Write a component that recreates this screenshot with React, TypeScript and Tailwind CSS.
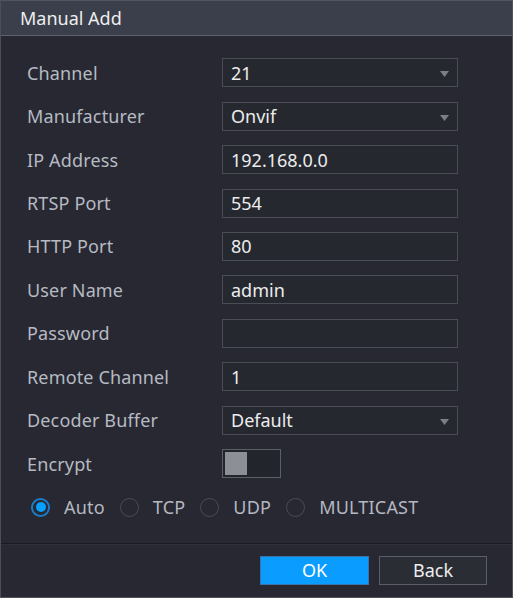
import React from "react";

const labelCls = "w-[195px] text-[18px] tracking-[0.15px] text-[#b6bac2] leading-none";

function Arrow() {
  return (
    <svg width="9" height="6" viewBox="0 0 9 6" className="absolute right-[8px] top-[12px]">
      <polygon points="0,0 9,0 4.5,6" fill="#7b7e86" />
    </svg>
  );
}

function Field({ value, select }: { value?: string; select?: boolean }) {
  return (
    <div className="relative w-[236px] h-[29px] border border-[#4a4d56] bg-[#262830] flex items-center pl-[8px] text-[18px] text-[#ececec] leading-none">
      <span>{value}</span>
      {select && <Arrow />}
    </div>
  );
}

function Row({ label, children }: { label: string; children: React.ReactNode }) {
  return (
    <div className="h-[43.44px] flex items-center">
      <div className={labelCls}>{label}</div>
      {children}
    </div>
  );
}

function Radio({ label, checked }: { label: string; checked?: boolean }) {
  return (
    <div className="flex items-center">
      <div
        className={
          "w-[19px] h-[19px] rounded-full flex items-center justify-center " +
          (checked ? "border-2 border-[#1b7dc6]" : "border-[1.5px] border-[#494c55]")
        }
      >
        {checked && <div className="w-[10px] h-[10px] rounded-full bg-[#0aa0ff]" />}
      </div>
      <span className="ml-[14px] mr-[15px] text-[18px] tracking-[0.2px] text-[#b4b8c0] leading-none">{label}</span>
    </div>
  );
}

export default function App() {
  return (
    <div
      className="w-[513px] h-[598px] bg-[#272832] border border-[#50545e] border-l-[#4a4e5a] flex flex-col"
      style={{ fontFamily: '"Noto Sans", "Open Sans", sans-serif' }}
    >
      <div className="h-[35px] shrink-0 bg-[#3b3e4b] border-b border-[#5d626d] flex items-center pl-[19px] text-[18px] text-[#eeeeee] leading-none">
        Manual Add
      </div>
      <div className="pt-[15px] pl-[26px] flex flex-col">
        <Row label="Channel"><Field value="21" select /></Row>
        <Row label="Manufacturer"><Field value="Onvif" select /></Row>
        <Row label="IP Address"><Field value="192.168.0.0" /></Row>
        <Row label="RTSP Port"><Field value="554" /></Row>
        <Row label="HTTP Port"><Field value="80" /></Row>
        <Row label="User Name"><Field value="admin" /></Row>
        <Row label="Password"><Field value="" /></Row>
        <Row label="Remote Channel"><Field value="1" /></Row>
        <Row label="Decoder Buffer"><Field value="Default" select /></Row>
        <Row label="Encrypt">
          <div className="w-[59px] h-[29px] border border-[#5c6069] bg-[#23252c] p-[2px] flex">
            <div className="w-[22px] h-full bg-[#8d8f97]" />
          </div>
        </Row>
        <div className="h-[43.44px] flex items-center pl-[4px]">
          <Radio label="Auto" checked />
          <Radio label="TCP" />
          <Radio label="UDP" />
          <Radio label="MULTICAST" />
        </div>
      </div>
      <div className="mt-[14px] h-[2px] border-t border-[#1a1b21] border-b border-b-[#2e3039]" />
      <div className="flex justify-end gap-[10px] pr-[25px] pt-[11px]">
        <button className="w-[109px] h-[29px] bg-[#0a9dff] border border-[#3c72a8] text-[18px] text-white leading-none">
          OK
        </button>
        <button className="w-[108px] h-[29px] bg-[#2b2d35] border border-[#5a5e67] text-[18px] text-[#eeeeee] leading-none">
          Back
        </button>
      </div>
    </div>
  );
}
